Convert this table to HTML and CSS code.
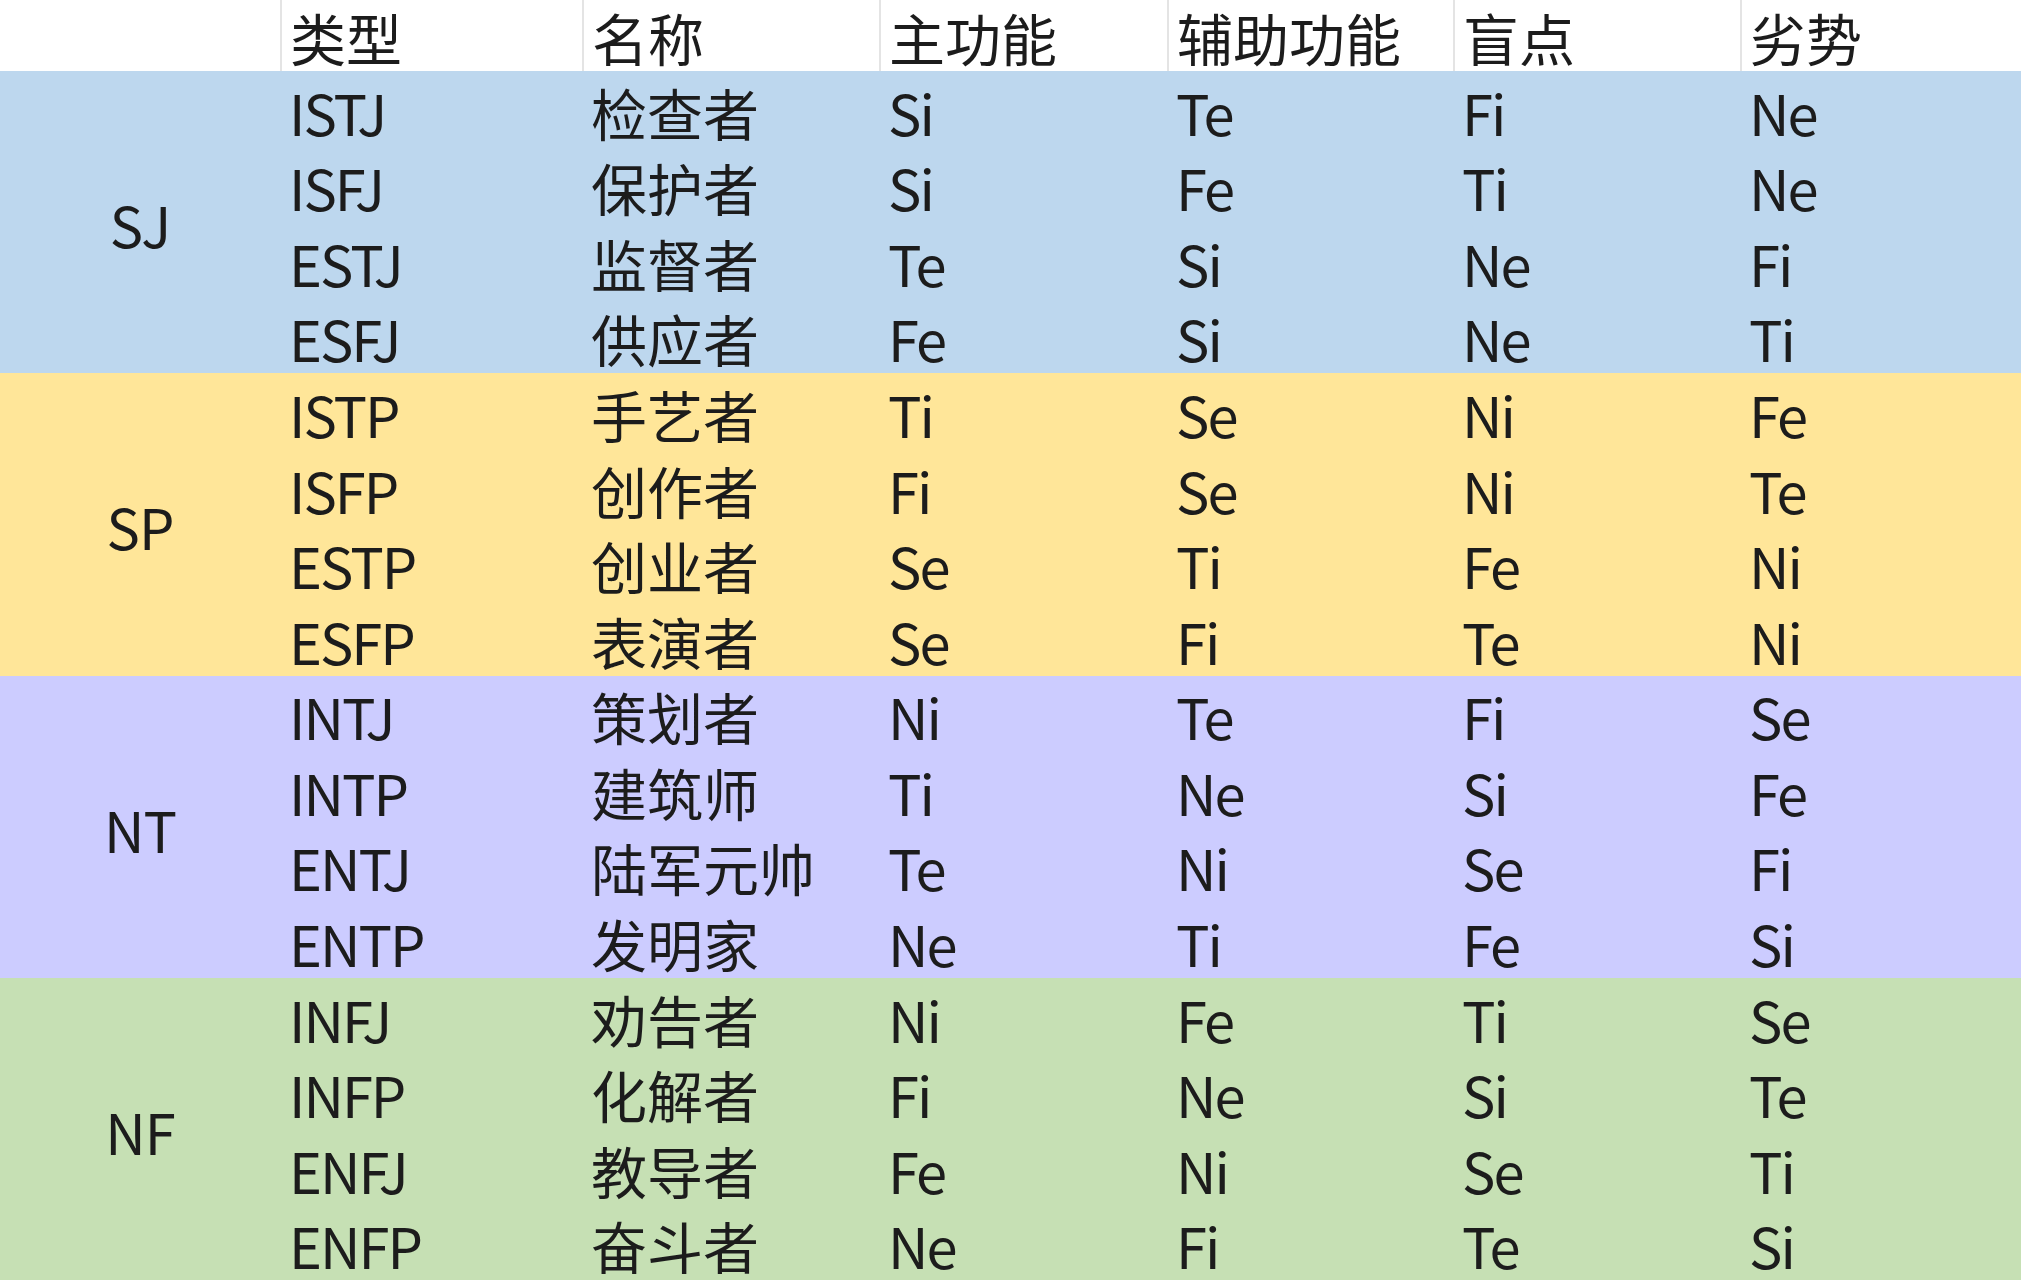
FILE: index.html
```html
<!DOCTYPE html>
<html lang="zh-CN">
<head>
<meta charset="utf-8">
<title>MBTI</title>
<link rel="stylesheet" href="styles.css">
</head>
<body>
<div class="sheet">
  <div class="header">
    <div class="cell"></div>
    <div class="cell hd">类型</div>
    <div class="cell hd">名称</div>
    <div class="cell hd">主功能</div>
    <div class="cell hd">辅助功能</div>
    <div class="cell hd">盲点</div>
    <div class="cell hd">劣势</div>
  </div>

  <div class="group sj">
    <div class="label">SJ</div>
    <div class="cell">ISTJ</div><div class="cell">检查者</div><div class="cell">Si</div><div class="cell">Te</div><div class="cell">Fi</div><div class="cell">Ne</div>
    <div class="cell">ISFJ</div><div class="cell">保护者</div><div class="cell">Si</div><div class="cell">Fe</div><div class="cell">Ti</div><div class="cell">Ne</div>
    <div class="cell">ESTJ</div><div class="cell">监督者</div><div class="cell">Te</div><div class="cell">Si</div><div class="cell">Ne</div><div class="cell">Fi</div>
    <div class="cell">ESFJ</div><div class="cell">供应者</div><div class="cell">Fe</div><div class="cell">Si</div><div class="cell">Ne</div><div class="cell">Ti</div>
  </div>

  <div class="group sp">
    <div class="label">SP</div>
    <div class="cell">ISTP</div><div class="cell">手艺者</div><div class="cell">Ti</div><div class="cell">Se</div><div class="cell">Ni</div><div class="cell">Fe</div>
    <div class="cell">ISFP</div><div class="cell">创作者</div><div class="cell">Fi</div><div class="cell">Se</div><div class="cell">Ni</div><div class="cell">Te</div>
    <div class="cell">ESTP</div><div class="cell">创业者</div><div class="cell">Se</div><div class="cell">Ti</div><div class="cell">Fe</div><div class="cell">Ni</div>
    <div class="cell">ESFP</div><div class="cell">表演者</div><div class="cell">Se</div><div class="cell">Fi</div><div class="cell">Te</div><div class="cell">Ni</div>
  </div>

  <div class="group nt">
    <div class="label">NT</div>
    <div class="cell">INTJ</div><div class="cell">策划者</div><div class="cell">Ni</div><div class="cell">Te</div><div class="cell">Fi</div><div class="cell">Se</div>
    <div class="cell">INTP</div><div class="cell">建筑师</div><div class="cell">Ti</div><div class="cell">Ne</div><div class="cell">Si</div><div class="cell">Fe</div>
    <div class="cell">ENTJ</div><div class="cell">陆军元帅</div><div class="cell">Te</div><div class="cell">Ni</div><div class="cell">Se</div><div class="cell">Fi</div>
    <div class="cell">ENTP</div><div class="cell">发明家</div><div class="cell">Ne</div><div class="cell">Ti</div><div class="cell">Fe</div><div class="cell">Si</div>
  </div>

  <div class="group nf">
    <div class="label">NF</div>
    <div class="cell">INFJ</div><div class="cell">劝告者</div><div class="cell">Ni</div><div class="cell">Fe</div><div class="cell">Ti</div><div class="cell">Se</div>
    <div class="cell">INFP</div><div class="cell">化解者</div><div class="cell">Fi</div><div class="cell">Ne</div><div class="cell">Si</div><div class="cell">Te</div>
    <div class="cell">ENFJ</div><div class="cell">教导者</div><div class="cell">Fe</div><div class="cell">Ni</div><div class="cell">Se</div><div class="cell">Ti</div>
    <div class="cell">ENFP</div><div class="cell">奋斗者</div><div class="cell">Ne</div><div class="cell">Fi</div><div class="cell">Te</div><div class="cell">Si</div>
  </div>
</div>
</body>
</html>
```

FILE: styles.css
```css
html, body {
  margin: 0;
  padding: 0;
  background: #ffffff;
}

.sheet {
  width: 2021px;
  height: 1280px;
  display: flex;
  flex-direction: column;
  overflow: hidden;
  font-family: "Noto Sans CJK SC", "Noto Sans", sans-serif;
  font-size: 56px;
  color: #1c1c1c;
}

.header,
.group {
  display: grid;
  grid-template-columns: 280px 302px 297px 288px 286px 287px 1fr;
}

.header {
  height: 71px;
  flex: none;
  background: #ffffff;
}

.header .cell {
  height: 71px;
  border-left: 2px solid #e4e4e4;
  padding-top: 2px;
  padding-left: 8px;
}

.header .cell:first-child {
  border-left: none;
}

.group {
  flex: none;
  height: 302.25px;
  grid-template-rows: repeat(4, minmax(0, 1fr));
}

.cell {
  padding-left: 9px;
  line-height: 1;
  white-space: nowrap;
  display: flex;
  align-items: center;
  padding-top: 6px;
  box-sizing: border-box;
  min-height: 0;
  overflow: visible;
}

.group .cell {
  letter-spacing: -2px;
}

.group .cell:nth-child(6n+3) {
  letter-spacing: 0;
}

.label {
  grid-row: 1 / span 4;
  display: flex;
  align-items: center;
  justify-content: center;
  line-height: 1;
  padding-top: 4px;
  letter-spacing: -1px;
}

.sj { background: #bdd7ee; }
.sp { background: #ffe699; }
.nt { background: #ccccff; }
.nf { background: #c6e0b4; }
```
